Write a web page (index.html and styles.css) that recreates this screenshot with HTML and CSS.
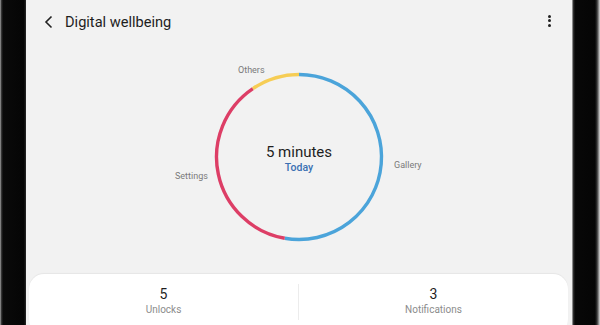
FILE: index.html
```html
<!DOCTYPE html>
<html lang="en">
<head>
    <meta charset="UTF-8">
    <meta name="viewport" content="width=device-width, initial-scale=1.0">
    <title>Digital wellbeing</title>
    <link rel="stylesheet" href="styles.css">
</head>
<body>

    <div class="device">
        <div class="bezel left"></div>

        <div class="screen">
            <div class="appbar">
                <span class="back">
                    <svg width="10" height="14" viewBox="0 0 10 14">
                        <path d="M7.5 1.5 L2 7 L7.5 12.5" fill="none" stroke="#222" stroke-width="1.6"/>
                    </svg>
                </span>
                <span class="title">Digital wellbeing</span>
                <span class="more">
                    <i></i><i></i><i></i>
                </span>
            </div>

            <div class="chart">
                <svg class="ring" width="546" height="230" viewBox="0 0 546 230">
                    <path d="M273 30.5 A82.5 82.5 0 1 1 258.7 194.25" class="seg gallery"/>
                    <path d="M258.7 194.25 A82.5 82.5 0 0 1 226.9 44.6" class="seg settings"/>
                    <path d="M226.9 44.6 A82.5 82.5 0 0 1 273 30.5" class="seg others"/>
                </svg>
                <span class="label lbl-others">Others</span>
                <span class="label lbl-settings">Settings</span>
                <span class="label lbl-gallery">Gallery</span>
                <div class="total">
                    <span class="minutes">5 minutes</span>
                    <span class="today">Today</span>
                </div>
            </div>

            <div class="stats">
                <div class="stat">
                    <span class="num">5</span>
                    <span class="name">Unlocks</span>
                </div>
                <div class="divider"></div>
                <div class="stat">
                    <span class="num">3</span>
                    <span class="name">Notifications</span>
                </div>
            </div>
        </div>

        <div class="bezel right"></div>
    </div>

</body>
</html>
```

FILE: styles.css
```css
html, body {
    margin: 0;
    padding: 0;
    height: 100%;
    overflow: hidden;
}

body {
    font-family: Roboto, "Noto Sans", Arial, sans-serif;
    background: #f2f2f2;
}

.device {
    display: flex;
    width: 600px;
    height: 325px;
}

.bezel {
    flex: none;
    height: 100%;
}

.bezel.left {
    width: 26px;
    background: linear-gradient(to right, #bdbdbd 0, #444 1px, #0a0a0a 3px, #050505 24px, #2a2a2a 26px);
}

.bezel.right {
    width: 28px;
    background: linear-gradient(to right, #dcdcdc 0, #3a3a3a 1px, #080808 3px, #050505 23px, #333 25px, #d8d8d8 28px);
}

.screen {
    width: 546px;
    flex: none;
    background: #f2f2f2;
    display: flex;
    flex-direction: column;
    overflow: hidden;
}

.screen > * {
    flex: none;
}

/* top bar */

.appbar {
    height: 44px;
    display: flex;
    align-items: center;
    padding: 0 0 0 18px;
    box-sizing: border-box;
}

.appbar .back {
    display: flex;
    width: 10px;
    height: 14px;
    margin-top: -1px;
}

.appbar .title {
    margin-left: 11px;
    margin-top: -1px;
    font-size: 14.6px;
    color: #1e1e1e;
}

.appbar .more {
    margin-left: auto;
    margin-right: 21px;
    margin-top: -3px;
    display: flex;
    flex-direction: column;
    gap: 1.5px;
}

.appbar .more i {
    display: block;
    width: 3px;
    height: 3px;
    border-radius: 50%;
    background: #222;
}

/* ring chart */

.chart {
    position: relative;
    height: 230px;
}

.ring {
    display: block;
}

.seg {
    fill: none;
    stroke-width: 3.4;
}

.seg.gallery { stroke: #4ba4da; }
.seg.settings { stroke: #dd3e66; }
.seg.others { stroke: #f6cd55; }

.label {
    position: absolute;
    font-size: 9px;
    color: #7a7a7a;
    line-height: 10px;
}

.lbl-others { left: 212px; top: 21px; }
.lbl-settings { left: 149px; top: 127px; }
.lbl-gallery { left: 368px; top: 116px; }

.total {
    position: absolute;
    left: 0;
    right: 0;
    top: 99px;
    display: flex;
    flex-direction: column;
    align-items: center;
}

.total .minutes {
    font-size: 15px;
    line-height: 18px;
    color: #1e1e1e;
}

.total .today {
    font-size: 10.5px;
    line-height: 12px;
    font-weight: 500;
    color: #3b70b2;
    margin-top: 1px;
}

/* bottom card */

.stats {
    margin: 0 4px 0 3px;
    height: 60px;
    background: #fff;
    border-radius: 15px;
    box-shadow: 0 -1px 1px rgba(0, 0, 0, 0.05);
    display: flex;
    align-items: flex-start;
}

.stat {
    flex: 1;
    display: flex;
    flex-direction: column;
    align-items: center;
    padding-top: 12px;
}

.stat .num {
    font-size: 14px;
    line-height: 16px;
    color: #1e1e1e;
}

.stat .name {
    font-size: 10px;
    line-height: 12px;
    color: #8c8c8c;
    margin-top: 2px;
}

.divider {
    width: 1px;
    height: 36px;
    margin-top: 10px;
    background: #ececec;
}
```
